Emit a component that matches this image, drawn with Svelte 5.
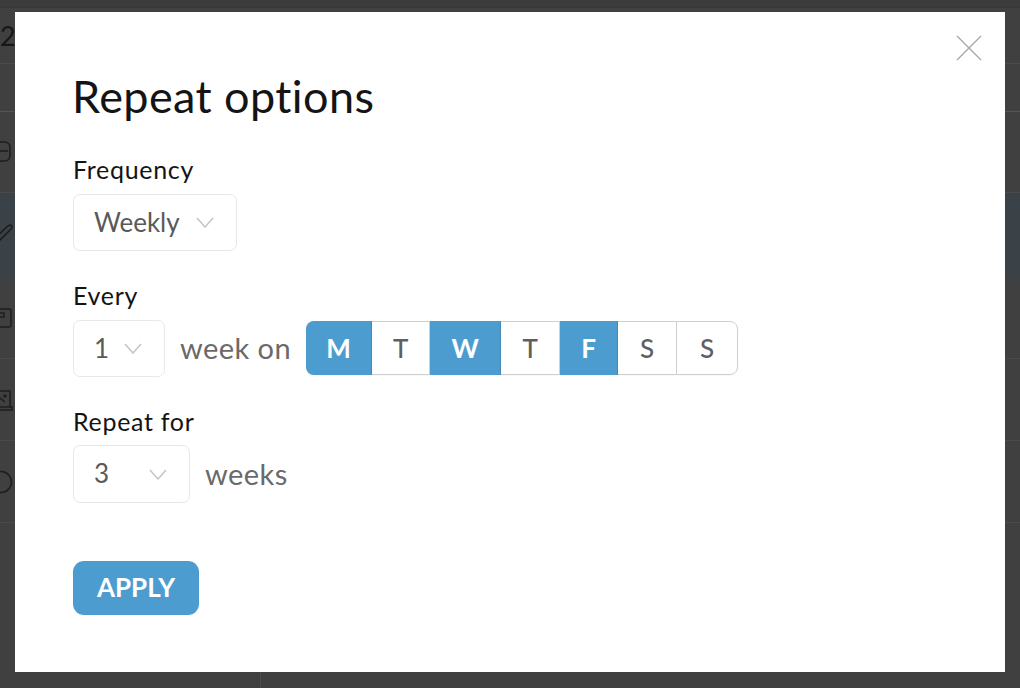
<script>
  const days = [
    { label: 'M', on: true, width: 66 },
    { label: 'T', on: false, width: 58 },
    { label: 'W', on: true, width: 71 },
    { label: 'T', on: false, width: 59 },
    { label: 'F', on: true, width: 58 },
    { label: 'S', on: false, width: 59 },
    { label: 'S', on: false, width: 60 }
  ]
</script>

<div class="page">
  <div class="behind">
    <div class="topbar"></div>
    <div class="row date">2</div>
    <div class="row spacer"></div>
    <div class="row icon-row">
      <svg class="bg-icon" width="24" height="24" viewBox="0 0 24 24"><rect x="1" y="2" width="20" height="19" rx="5" /><path d="M4 11h15" /></svg>
    </div>
    <div class="row icon-row active">
      <svg class="bg-icon" width="24" height="24" viewBox="0 0 24 24"><path d="M3 23l1-6L19 3c3-2 5 0 3 3L8 20z" /></svg>
    </div>
    <div class="row icon-row tall">
      <svg class="bg-icon" width="24" height="24" viewBox="0 0 24 24"><rect x="1" y="3" width="21" height="18" rx="2" /><path d="M8 7h7v4H8z" /></svg>
    </div>
    <div class="row icon-row tall">
      <svg class="bg-icon" width="24" height="24" viewBox="0 0 24 24"><path d="M3 3h18v16H3zM1 19h22v3H1zM6 16l5-6 5 4" /><circle cx="16" cy="8" r="1" /></svg>
    </div>
    <div class="row icon-row tall">
      <svg class="bg-icon" width="24" height="24" viewBox="0 0 24 24"><circle cx="12" cy="12" r="10.5" /></svg>
    </div>
    <div class="rest"></div>
  </div>

  <div class="modal">
    <button class="close" aria-label="Close">
      <svg width="26" height="26" viewBox="0 0 26 26"><path d="M1 1l24 24M25 1L1 25" /></svg>
    </button>

    <h1>Repeat options</h1>

    <div class="label first">Frequency</div>
    <div class="line">
      <div class="select freq">
        <span>Weekly</span>
        <svg class="chev" width="18" height="11" viewBox="0 0 18 11"><path d="M1 1l8 9 8-9" /></svg>
      </div>
    </div>

    <div class="label every">Every</div>
    <div class="line">
      <div class="select num">
        <span>1</span>
        <svg class="chev" width="18" height="11" viewBox="0 0 18 11"><path d="M1 1l8 9 8-9" /></svg>
      </div>
      <span class="after">week on</span>
      <div class="days">
        {#each days as day}
          <div class="day" class:on={day.on} style="width: {day.width}px">{day.label}</div>
        {/each}
      </div>
    </div>

    <div class="label for">Repeat for</div>
    <div class="line">
      <div class="select weeks">
        <span>3</span>
        <svg class="chev" width="18" height="11" viewBox="0 0 18 11"><path d="M1 1l8 9 8-9" /></svg>
      </div>
      <span class="after">weeks</span>
    </div>

    <button class="apply">APPLY</button>
  </div>
</div>

<style>
  :global(body) {
    margin: 0;
    background: #404040;
    font-family: Lato, "Noto Sans", sans-serif;
  }

  .page {
    position: relative;
    width: 1020px;
    height: 688px;
    overflow: hidden;
    background: #404040;
  }

  .behind {
    display: flex;
    flex-direction: column;
    height: 100%;
  }

  .topbar {
    height: 8px;
    background: #3c3c3c;
    border-bottom: 1px solid #383838;
    box-sizing: border-box;
  }

  .row {
    border-bottom: 1px solid #4a4a4a;
    box-sizing: border-box;
  }

  .date {
    height: 56px;
    padding-top: 10px;
    font-size: 27px;
    line-height: 36px;
    color: #161616;
    border-bottom-color: #4b4b4b;
  }

  .spacer {
    height: 48px;
    border-bottom-color: #555;
  }

  .icon-row {
    height: 81px;
    display: flex;
    align-items: center;
  }

  .icon-row.tall {
    height: 82px;
  }

  .icon-row.active {
    height: 84px;
    background: #3a4147;
    border-bottom: none;
  }

  .bg-icon {
    margin-left: -11px;
    flex: none;
  }

  .bg-icon :global(*) {
    fill: none;
    stroke: #1e1e1e;
    stroke-width: 1.6;
  }

  .rest {
    flex: 1;
    width: 261px;
    border-right: 1px solid #4c4c4c;
    box-sizing: border-box;
  }

  .modal {
    position: absolute;
    left: 15px;
    top: 12px;
    width: 990px;
    height: 660px;
    box-sizing: border-box;
    padding: 58px 58px 0;
    background: #fff;
    display: flex;
    flex-direction: column;
    align-items: flex-start;
  }

  .close {
    position: absolute;
    top: 23px;
    right: 23px;
    padding: 0;
    border: none;
    background: none;
    display: flex;
  }

  .close path {
    fill: none;
    stroke: #a6a6a6;
    stroke-width: 1.3;
  }

  h1 {
    margin: 0 0 0 -1px;
    height: 56px;
    font-size: 45px;
    line-height: 52px;
    font-weight: 400;
    letter-spacing: 0.4px;
    color: #141414;
  }

  .label {
    font-size: 25px;
    line-height: 30px;
    letter-spacing: 0.7px;
    color: #141414;
  }

  .first {
    margin-top: 28px;
    margin-bottom: 10px;
  }

  .every {
    margin-top: 29px;
    margin-bottom: 10px;
  }

  .for {
    margin-top: 29px;
    margin-bottom: 9px;
  }

  .line {
    display: flex;
    align-items: center;
  }

  .select {
    display: flex;
    align-items: center;
    justify-content: space-between;
    box-sizing: border-box;
    height: 57px;
    padding: 0 22px 0 20px;
    border: 1px solid #e8e8e8;
    border-radius: 7px;
    font-size: 26px;
    color: #5a5a5a;
  }

  .select span {
    margin-top: -2px;
  }

  .freq {
    width: 164px;
  }

  .num {
    width: 92px;
  }

  .weeks {
    width: 117px;
    height: 58px;
  }

  .chev {
    flex: none;
  }

  .chev path {
    fill: none;
    stroke: #c4c4c4;
    stroke-width: 1.5;
  }

  .after {
    margin: -2px 15px 0;
    font-size: 29px;
    letter-spacing: 0.45px;
    color: #6a6a6a;
  }

  .days {
    display: flex;
    align-self: flex-start;
    margin-top: 1px;
    height: 54px;
    box-sizing: border-box;
    border: 1px solid #cfcfcf;
    border-radius: 8px;
    box-shadow: 0 1px 2px rgba(0, 0, 0, 0.04);
  }

  .day {
    display: flex;
    align-items: center;
    justify-content: center;
    box-sizing: border-box;
    border-right: 1px solid #cfcfcf;
    font-size: 26px;
    font-weight: 500;
    color: #5f5f63;
  }

  .day:last-child {
    border-right: none;
  }

  .day.on {
    margin: -1px 0;
    background: #4d9cd0;
    border-right-color: #4589b6;
    color: #fff;
    font-weight: 700;
  }

  .day:first-child {
    margin-left: -1px;
    border-radius: 8px 0 0 8px;
  }

  .apply {
    margin-top: 58px;
    padding: 0 0 2px;
    width: 126px;
    height: 54px;
    border: none;
    border-radius: 11px;
    background: #4d9cd0;
    color: #fff;
    font-family: inherit;
    font-size: 26px;
    font-weight: 700;
  }
</style>
